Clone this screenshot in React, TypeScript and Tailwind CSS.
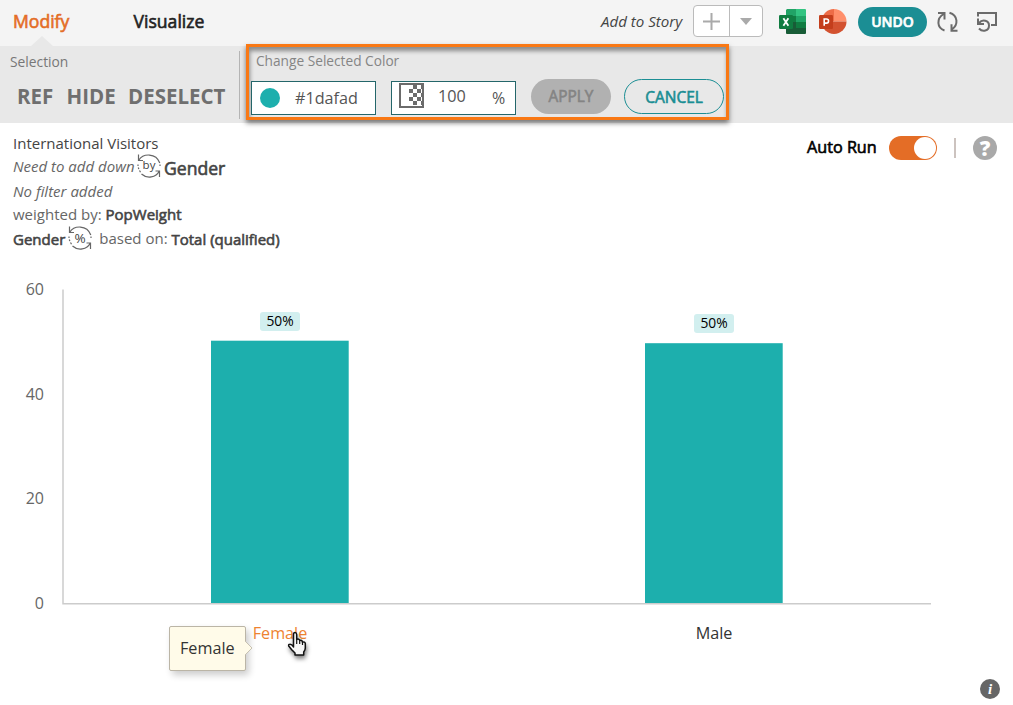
import React from "react";

const heavy = "[-webkit-text-stroke:0.6px_currentColor]";

function ExcelIcon() {
  return (
    <svg width="28" height="26" viewBox="0 0 28 26">
      <path d="M8 0h10v7H7V1z" fill="#21a366" />
      <path d="M17 0h9a1 1 0 0 1 1 1v6H17z" fill="#33c481" />
      <path d="M7 7h10v6H7z" fill="#107c41" />
      <path d="M17 7h10v6H17z" fill="#21a366" />
      <path d="M7 13h10v6H7z" fill="#185c37" />
      <path d="M17 13h10v6H17z" fill="#107c41" />
      <path d="M7 19h20v5a1 1 0 0 1-1 1H8a1 1 0 0 1-1-1z" fill="#185c37" />
      <rect x="0" y="6" width="14" height="14" rx="1.2" fill="#107c41" />
      <path d="M4.4 9.2l5 7.6M9.4 9.2l-5 7.6" stroke="#fff" strokeWidth="1.8" />
    </svg>
  );
}

function PowerPointIcon() {
  return (
    <svg width="28" height="26" viewBox="0 0 28 26">
      <path d="M15 12.5L2.5 12.5A12.5 12.5 0 0 1 15 0z" fill="#ed6c47" />
      <path d="M15 0a12.5 12.5 0 0 1 12.5 12.5H15z" fill="#ff8f6b" />
      <path d="M2.5 12.5h25a12.5 12.5 0 0 1-25 0z" fill="#d35230" />
      <rect x="0" y="6" width="14" height="14" rx="1.2" fill="#c43e1c" />
      <path d="M5.2 16.8V10h2.3a2 2 0 0 1 0 4.1H5.2" fill="none" stroke="#fff" strokeWidth="1.6" />
    </svg>
  );
}

function RefreshIcon() {
  return (
    <svg width="22" height="22" viewBox="0 0 22 22" fill="none" stroke="#6b6b6b" strokeWidth="2">
      <path d="M7.500 19.500C-.2 17 -.7 7.500 6.500 3M1 2h6.500v6.500" />
      <path d="M12.500 1.700C21 4.200 21.700 14 14.700 18.500M20.500 19.700h-6v-6.500" />
    </svg>
  );
}

function ReturnIcon() {
  return (
    <svg width="22" height="22" viewBox="0 0 22 22" fill="none" stroke="#6b6b6b" strokeWidth="2">
      <path d="M2 5.500V2h18v12h-5" />
      <path d="M2 7.500v5.500h6M3 12C6.500 7.800 13 9.500 13 14.500 13 20 6.500 21.300 3 17.500" />
    </svg>
  );
}

function OpacityIcon() {
  const cells = [[14, 2], [10, 6], [18, 6], [14, 10], [10, 14], [18, 14], [14, 18]];
  return (
    <svg width="25" height="25" viewBox="0 0 25 25">
      <rect x="1" y="1" width="23" height="23" fill="#fff" stroke="#6b6b6b" strokeWidth="2" />
      {cells.map(([x, y]) => (
        <rect key={`${x}-${y}`} x={x} y={y} width="4" height="4" fill="#6b6b6b" />
      ))}
      <path d="M22 2h2v4h-2zM22 10h2v4h-2zM22 18h2v4h-2z" fill="#6b6b6b" />
    </svg>
  );
}

function CycleBadge({ label }: { label: string }) {
  return (
    <svg width="24" height="24" viewBox="0 0 24 24" fill="none" stroke="#666" strokeWidth="1.200">
      <path d="M1.500 .5V6.500h4.500M1.800 6.200C6 -.8 19-1.500 22.800 9" />
      <path d="M22.500 23v-6h-4M22.300 17C19 23.800 10 25 4.500 20" />
      <path d="M1 10.500v1.500M1.300 13.500l.5 1.700M2.500 16.500l1 1.700M23 10.500v1.500" />
      <text x="12" y={label === "%" ? 16.5 : 15} textAnchor="middle" fill="#444" stroke="none" fontSize={label === "%" ? 13.5 : 11.5}>
        {label}
      </text>
    </svg>
  );
}

function Chart() {
  const bars = [
    { x: 211, y: 340.7, label: 321 },
    { x: 645, y: 343.2, label: 323 },
  ];
  return (
    <svg className="block" width="1013" height="385" viewBox="0 270 1013 385" fontSize="16">
      {[60, 40, 20, 0].map((v, i) => (
        <text key={v} x="44" y={295 + i * 104.67} textAnchor="end" fill="#666">{v}</text>
      ))}
      {bars.map((b) => (
        <g key={b.x}>
          <rect x={b.x} y={b.y} width="137.700" height={603 - b.y} fill="#1dafad" />
          <rect x={b.x + 49} y={b.label - 9} width="40" height="19" rx="3" fill="#d2efef" />
          <text x={b.x + 69} y={b.label + 5} textAnchor="middle" fontSize="13.800" fill="#000">50%</text>
        </g>
      ))}
      <path d="M63 289.500V603.700H931" fill="none" stroke="#ccc" strokeWidth="1.500" />
      <text x="280" y="639" textAnchor="middle" fill="#ee8330" fontSize="16.200">Female</text>
      <text x="714" y="639" textAnchor="middle" fill="#333" fontSize="16.200">Male</text>
    </svg>
  );
}

function HandCursor() {
  return (
    <svg className="absolute left-[287px] top-[631px] drop-shadow-[1px_3px_2px_rgba(0,0,0,0.5)]" width="20" height="27" viewBox="0 0 20 27">
      <path
        d="M6.500 14.500V3.500Q6.500 1.500 8 1.500T9.700 3.500V8.500Q11 7.500 12.200 8.500L12.700 9.500Q14.200 8.800 15.300 10.200V11Q18 10.500 18.300 12.700V17Q18.300 19 16.700 21V24H8V22L4.500 18.500 1.700 15Q1.300 13.300 2.800 13.200 4.800 13 6.500 16z"
        fill="#f6f6f6" stroke="#111" strokeWidth="1.500" strokeLinejoin="round"
      />
      <path d="M9.700 8v5M12.700 9.500V13M15.500 11v3" stroke="#111" strokeWidth="1.200" />
    </svg>
  );
}

export default function App() {
  return (
    <div className="relative h-[705px] w-[1013px] overflow-hidden bg-white font-['Open_Sans',sans-serif] whitespace-nowrap">
      <header className="flex h-[46px] items-start bg-[#f4f4f4]">
        <div className="flex w-[600px] pt-[9px] pl-[13px] text-[17.6px] leading-6">
          <div className={`w-[120.500px] text-[#e46d26] ${heavy}`}>Modify</div>
          <div className={`text-[#222] ${heavy}`}>Visualize</div>
        </div>
        <div className="w-[93px] pt-[9px] pl-px text-[15.1px] leading-6 text-[#444] italic">Add to Story</div>
        <div className="mt-[5px] flex h-8 w-[70px] rounded-[4px] border border-[#bbb] bg-white">
          <div className="flex w-[36px] items-center justify-center border-r border-[#bbb]">
            <svg width="17" height="17"><path d="M8.500 0v17M0 8.500h17" stroke="#aaa" strokeWidth="2" /></svg>
          </div>
          <div className="flex flex-1 items-center justify-center">
            <svg width="12" height="7"><path d="M0 0h12L6 7z" fill="#aaa" /></svg>
          </div>
        </div>
        <div className="mt-[9px] ml-4"><ExcelIcon /></div>
        <div className="mt-[9px] ml-3"><PowerPointIcon /></div>
        <button className={`mt-[7px] ml-[11px] h-[30px] w-[69px] rounded-full bg-[#1b8e94] text-[14px] leading-[30px] font-semibold text-white ${heavy}`}>UNDO</button>
        <div className="mt-[11px] ml-[9.500px]"><RefreshIcon /></div>
        <div className="mt-[11px] ml-[17.500px]"><ReturnIcon /></div>
      </header>
      <svg className="absolute top-[36px] left-[31px]" width="22" height="10"><path d="M0 10L11 0l11 10z" fill="#e8e8e8" /></svg>

      <section className="flex h-[77px] bg-[#e8e8e8]">
        <div className="mt-[5px] h-[68px] w-[240px] border-r border-[#b5b5b5]">
          <div className="pl-[10px] text-[13.8px] leading-[22px] text-[#777]">Selection</div>
          <div className="flex pt-[9px] pl-[17px] text-[20.5px] leading-7 font-bold text-[#6f6f6f]">
            <span className="w-[49.500px]">REF</span>
            <span className="w-[61.500px]">HIDE</span>
            <span>DESELECT</span>
          </div>
        </div>
        <div className="relative z-10 -mt-[2px] ml-[6px] h-[76px] w-[483px] border-3 border-[#f97814] shadow-[0_3px_5px_rgba(0,0,0,0.5),inset_1px_4px_4px_rgba(0,0,0,0.4)]">
          <div className="pt-[4px] pl-[7px] text-[13.7px] leading-5 text-[#858585]">Change Selected Color</div>
          <div className="flex pt-[8px] pl-[2px]">
            <div className="mt-[2px] flex h-[34px] w-[125px] items-center border border-[#24666a] bg-white pl-2 text-[16.2px] text-[#555]">
              <i className="mr-[15px] size-5 rounded-full bg-[#1dafad]" />#1dafad
            </div>
            <div className="mt-[2px] ml-[15px] flex h-[34px] w-[125px] border border-[#24666a] bg-white pt-px pl-[7px] text-[#555]">
              <OpacityIcon />
              <span className="ml-[14px] w-[54px] text-[16.2px] leading-[26px]">100</span>
              <span className="text-[16px] leading-[30px]">%</span>
            </div>
            <button className={`ml-[15px] h-[35px] w-[80px] rounded-full bg-[#b1b1b1] pt-px text-[15.4px] leading-[34px] text-[#848484] ${heavy}`}>APPLY</button>
            <button className={`ml-[13px] h-[35px] w-[100px] rounded-full border border-[#1b8e94] pt-px text-[15.5px] leading-8 text-[#1b8e94] ${heavy}`}>CANCEL</button>
          </div>
        </div>
      </section>

      <section className="flex h-[147px] items-start pl-[13px] text-[15px] text-[#666]">
        <div className="w-[794px] pt-[9px]">
          <div className="h-[22px] leading-[22px] text-[#444]">International Visitors</div>
          <div className="flex h-[26px]">
            <span className="w-[124px] leading-[24px] italic">Need to add down</span>
            <CycleBadge label="by" />
            <span className={`ml-[3px] text-[17.6px] leading-[28px] text-[#444] ${heavy}`}>Gender</span>
          </div>
          <div className="h-[23px] leading-[23px] italic">No filter added</div>
          <div className="h-[23px] leading-[22px]">weighted by: <span className={`text-[#444] ${heavy}`}>PopWeight</span></div>
          <div className="flex h-[26px] leading-[26px]">
            <span className={`mr-[3px] text-[#444] ${heavy}`}>Gender</span>
            <CycleBadge label="%" />
            <span className="ml-[7px] leading-[25px]">based on:&nbsp;</span>
            <span className={`text-[#444] ${heavy}`}>Total (qualified)</span>
          </div>
        </div>
        <div className={`w-[82px] pt-[12px] text-[16.2px] leading-6 text-black ${heavy}`}>Auto Run</div>
        <div className="mt-[13px] flex h-6 w-12 justify-end rounded-full bg-[#e46d26] p-px"><i className="size-[22px] rounded-full bg-white" /></div>
        <div className="mt-[15px] ml-[17px] h-5 w-0.5 bg-[#ccc3bf]" />
        <div className="mt-[13px] ml-[17px] size-6 rounded-full bg-[#a9a9a9] text-center text-[21px] leading-6 font-extrabold text-white">?</div>
      </section>

      <Chart />
      <div className="absolute top-[626px] left-[169px] h-[45px] w-[77px] rounded-[2px] border border-[#bbb5a6] bg-[#fffbe9] pl-[10px] text-[16.2px] leading-[43px] text-[#333] shadow-[3px_4px_7px_rgba(0,0,0,0.2)]">Female</div>
      <svg className="absolute top-[640px] left-[245px]" width="8" height="16"><path d="M0 1L7 8 0 15" fill="#fffbe9" stroke="#c7c1b2" /></svg>
      <HandCursor />
      <div className="absolute top-[679px] left-[980px] size-5 rounded-full bg-[#666] text-center font-['Liberation_Serif',serif] text-[15px] leading-5 font-bold text-white italic">i</div>
    </div>
  );
}
